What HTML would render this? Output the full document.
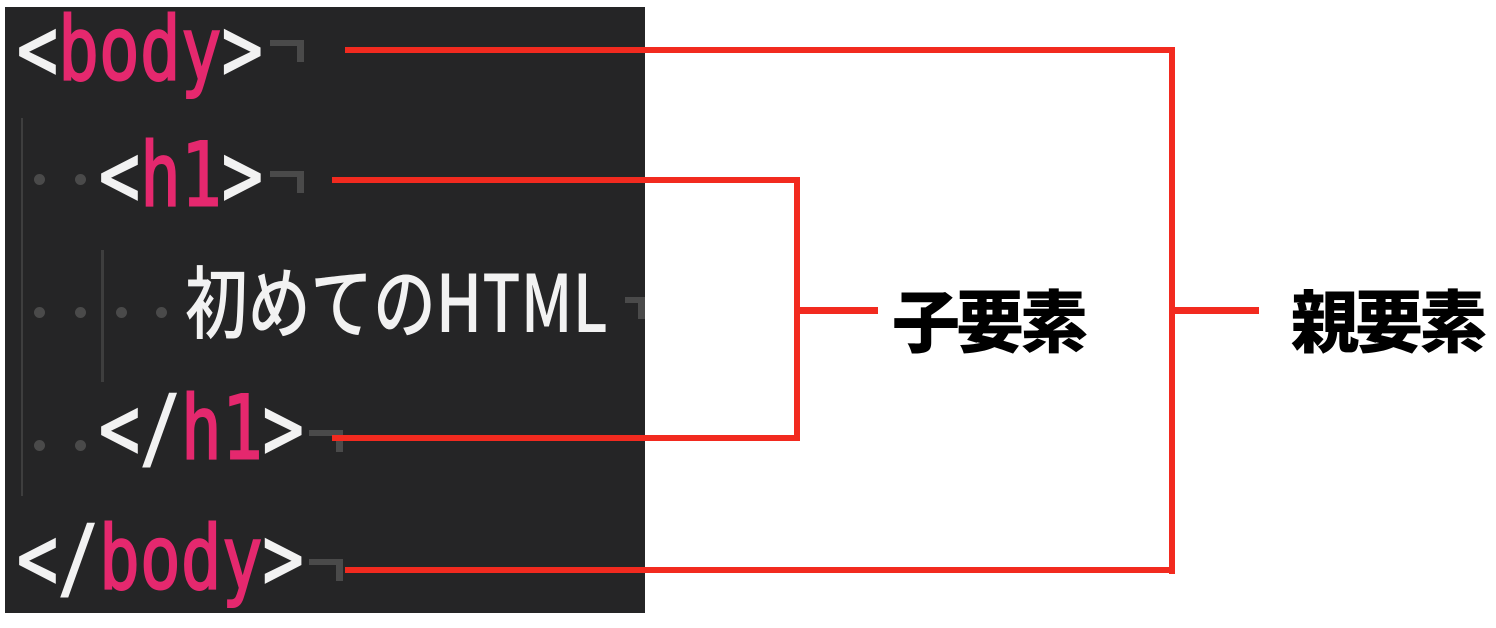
<!DOCTYPE html>
<html><head><meta charset="utf-8"><style>
body{margin:0;width:1496px;height:628px;background:#fff;position:relative;overflow:hidden}
.panel{position:absolute;left:5px;top:7px;width:640px;height:606px;background:#252526}
.code{position:absolute;font-family:"DejaVu Sans Mono","Liberation Mono","Noto Sans CJK JP",monospace;font-size:68px;color:#f2f2f2;white-space:pre;line-height:1;transform:scale(1,1.3);transform-origin:0 100%;-webkit-text-stroke:1.5px currentColor}
.t{color:#e5286e}
.r{position:absolute;background:#f22a1f}
.g{position:absolute;background:#555}
.d{position:absolute;width:11px;height:11px;border-radius:50%;background:#4a4a4a}
.lab{position:absolute;font-family:"Noto Sans CJK JP",sans-serif;font-weight:900;font-size:68px;color:#000;line-height:1}
.mk{position:absolute;width:34px;height:6px;background:#4a4a4a}
.mk:after{content:"";position:absolute;right:0;top:0;width:7px;height:22px;background:#4a4a4a}
</style></head><body>
<div class="panel"></div>
<div class="g" style="left:21px;top:118px;width:2px;height:378px;background:#3e3e3e"></div>
<div class="g" style="left:101px;top:250px;width:3px;height:132px;background:#3e3e3e"></div>
<div class="d" style="left:34px;top:174px"></div><div class="d" style="left:75px;top:174px"></div>
<div class="d" style="left:34px;top:307px"></div><div class="d" style="left:75px;top:307px"></div>
<div class="d" style="left:116px;top:307px"></div><div class="d" style="left:156px;top:307px"></div>
<div class="d" style="left:34px;top:440px"></div><div class="d" style="left:75px;top:440px"></div>
<div class="code" style="left:17px;top:27px">&lt;<span class="t">body</span>&gt;</div>
<div class="code" style="left:99px;top:153px">&lt;<span class="t">h1</span>&gt;</div>
<div class="code" style="left:185px;top:272px;font-family:'Noto Sans CJK JP',sans-serif;font-weight:500;font-size:66px;transform:scale(0.95,1.2);-webkit-text-stroke:0">初めてのHTML</div>
<div class="code" style="left:99px;top:406px">&lt;/<span class="t">h1</span>&gt;</div>
<div class="code" style="left:17px;top:536px">&lt;/<span class="t">body</span>&gt;</div>
<div class="mk" style="left:270px;top:40px"></div>
<div class="mk" style="left:270px;top:171px"></div>
<div class="mk" style="left:309px;top:430px"></div>
<div class="mk" style="left:309px;top:559px"></div>
<div class="mk" style="left:625px;top:297px;width:20px"></div>
<div class="r" style="left:345px;top:47px;width:830px;height:6px"></div>
<div class="r" style="left:1169px;top:47px;width:6px;height:527px"></div>
<div class="r" style="left:345px;top:567px;width:830px;height:6px"></div>
<div class="r" style="left:332px;top:177px;width:468px;height:6px"></div>
<div class="r" style="left:794px;top:177px;width:6px;height:264px"></div>
<div class="r" style="left:332px;top:435px;width:468px;height:6px"></div>
<div class="r" style="left:794px;top:307px;width:84px;height:7px"></div>
<div class="r" style="left:1169px;top:307px;width:90px;height:7px"></div>
<div class="lab" style="left:892px;top:284px;letter-spacing:-4px">子要素</div>
<div class="lab" style="left:1291px;top:284px;letter-spacing:-4px">親要素</div>
</body></html>
